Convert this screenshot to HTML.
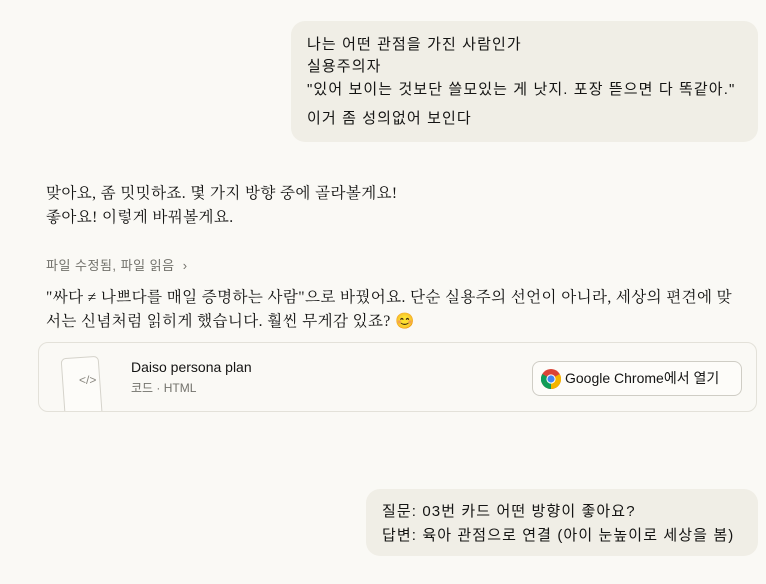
<!DOCTYPE html>
<html><head><meta charset="utf-8"><style>
*{margin:0;padding:0;box-sizing:border-box}
body{width:766px;height:584px;background:#faf9f5;font-family:"Liberation Sans","Noto Sans CJK KR",sans-serif;color:#141413;font-size:15px;position:relative;overflow:hidden}
.b{position:absolute;background:#f0eee6;border-radius:14px}
.t{position:absolute;white-space:nowrap;line-height:23px}
.u{letter-spacing:1.1px}
.s{font-family:"Liberation Serif","Noto Serif CJK SC",serif;letter-spacing:0.4px;font-size:15.5px}
</style></head><body>
<div class="b" style="left:291px;top:21px;width:467px;height:121px"></div>
<div class="t u" style="left:307px;top:33px">나는 어떤 관점을 가진 사람인가</div>
<div class="t u" style="left:307px;top:55px">실용주의자</div>
<div class="t u" style="left:307px;top:78px">"있어 보이는 것보단 쓸모있는 게 낫지. 포장 뜯으면 다 똑같아."</div>
<div class="t u" style="left:307px;top:107px">이거 좀 성의없어 보인다</div>

<div class="t s" style="left:46px;top:182px">맞아요, 좀 밋밋하죠. 몇 가지 방향 중에 골라볼게요!</div>
<div class="t s" style="left:46px;top:206px">좋아요! 이렇게 바꿔볼게요.</div>
<div class="t" style="left:46px;top:254px;font-size:13px;color:#73726c;letter-spacing:0.5px">파일 수정됨, 파일 읽음 &nbsp;›</div>
<div class="t s" style="left:46px;top:286px">"싸다 ≠ 나쁘다를 매일 증명하는 사람"으로 바꿨어요. 단순 실용주의 선언이 아니라, 세상의 편견에 맞</div>
<div class="t s" style="left:46px;top:310px">서는 신념처럼 읽히게 했습니다. 훨씬 무게감 있죠? 😊</div>

<div style="position:absolute;left:38px;top:342px;width:719px;height:70px;border:1px solid #e3e1d9;border-radius:10px;background:#faf9f5;overflow:hidden">
 <div style="position:absolute;left:24px;top:14px;width:38px;height:70px;border:1px solid #d5d3cb;border-radius:5px;background:#fdfcf9;transform:rotate(-4deg)"></div>
 <div style="position:absolute;left:40px;top:30px;font-size:12px;color:#8a8880">&lt;/&gt;</div>
 <div class="t" style="left:92px;top:13px;font-size:14px">Daiso persona plan</div>
 <div class="t" style="left:92px;top:34px;font-size:12px;color:#73726c">코드 · HTML</div>
 <div style="position:absolute;left:493px;top:18px;width:210px;height:35px;border:1px solid #cfcdc5;border-radius:8px;background:#fdfcf9"></div>
 <svg style="position:absolute;left:502px;top:26px" width="20" height="20" viewBox="0 0 20 20"><circle cx="10" cy="10" r="10" fill="#db4437"/><path d="M10 10 L1.3 15 A10 10 0 0 0 10 20 Z" fill="#0f9d58"/><path d="M10 10 L1.3 15 A10 10 0 0 1 1.3 5 Z" fill="#0f9d58"/><path d="M10 10 L18.7 5 A10 10 0 0 1 10 20 Z" fill="#f4b400"/><circle cx="10" cy="10" r="4.6" fill="#fff"/><circle cx="10" cy="10" r="3.6" fill="#4285f4"/></svg>
 <div class="t" style="left:526px;top:24px;font-size:14px">Google Chrome에서 열기</div>
</div>

<div class="b" style="left:366px;top:489px;width:392px;height:67px"></div>
<div class="t u" style="left:382px;top:500px">질문: 03번 카드 어떤 방향이 좋아요?</div>
<div class="t u" style="left:382px;top:524px">답변: 육아 관점으로 연결 (아이 눈높이로 세상을 봄)</div>
</body></html>
